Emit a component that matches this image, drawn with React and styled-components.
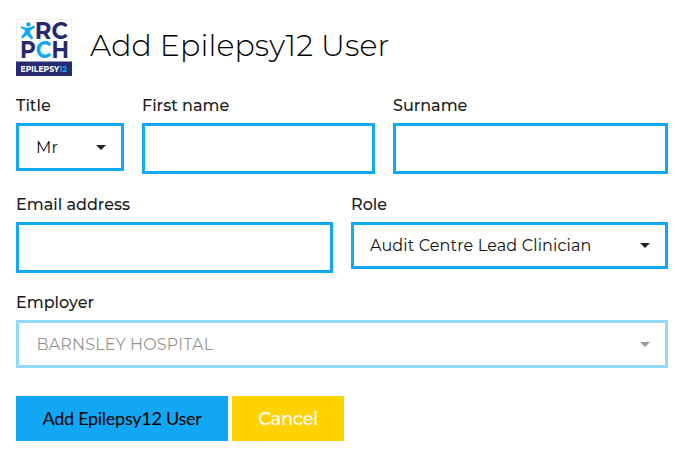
import React from "react";
import styled, { createGlobalStyle } from "styled-components";

const GlobalStyle = createGlobalStyle`
  * { box-sizing: border-box; }
  body {
    margin: 0;
    background: #fff;
    font-family: Montserrat, Inter, sans-serif;
    color: #1c1c1c;
  }
`;

const Page = styled.main`
  width: 675px;
  height: 451px;
  padding: 19px 7px 0 16px;
  overflow: hidden;
`;

const Header = styled.header`
  display: flex;
  align-items: flex-start;
  gap: 18px;
  height: 77px;
`;

const Logo = styled.svg`
  display: block;
  width: 56px;
  height: 57px;
  flex: none;
  overflow: visible;
`;

const Heading = styled.h1`
  margin: 9px 0 0;
  font-size: 30px;
  line-height: 36px;
  font-weight: 300;
  letter-spacing: 0.15px;
  color: #000;
  white-space: nowrap;
`;

const Row = styled.div`
  display: grid;
  grid-template-columns: ${(p) => p.$columns};
  column-gap: 18px;
  align-items: start;
  height: ${(p) => p.$height}px;
`;

const Field = styled.div`
  display: flex;
  flex-direction: column;
`;

const Label = styled.label`
  height: 27px;
  line-height: 20px;
  font-size: 16px;
  font-weight: 500;
  white-space: nowrap;
`;

const TextInput = styled.input`
  width: 100%;
  height: 51px;
  padding: 0 16px;
  border: 3px solid #11a7f2;
  border-radius: 0;
  background: #fff;
  font: inherit;
  outline: none;
`;

const Select = styled.div`
  display: flex;
  align-items: center;
  justify-content: space-between;
  height: ${(p) => p.$height || 48}px;
  padding: 0 15px 0 ${(p) => p.$inset || 16}px;
  border: 3px solid #11a7f2;
  background: #fff;
  color: #111;
  font-size: 16px;
  letter-spacing: 0.15px;
  white-space: nowrap;
  opacity: ${(p) => (p.$disabled ? 0.45 : 1)};
`;

const Caret = styled.span`
  width: 0;
  height: 0;
  border: 5px solid transparent;
  border-top: 5px solid #222;
  border-bottom: 0;
`;

const Actions = styled.div`
  display: flex;
  gap: 4px;
`;

const Button = styled.button`
  width: ${(p) => p.$width}px;
  height: 45px;
  padding: 0;
  border: 0;
  font-size: 18px;
  white-space: nowrap;
`;

const SubmitButton = styled(Button)`
  padding-bottom: 1px;
  background: #11a7f2;
  color: #000;
  font-family: Lato, sans-serif;
  letter-spacing: -0.27px;
`;

const CancelButton = styled(Button)`
  background: #ffd200;
  color: #fff;
  font-family: Montserrat, Inter, sans-serif;
  font-weight: 500;
  letter-spacing: -0.4px;
`;

function RcpchLogo() {
  return (
    <Logo viewBox="0 0 56 57" role="img" aria-label="RCPCH Epilepsy12">
      <rect x="0.5" y="0.5" width="55" height="56" fill="#fff" stroke="#f1f1f4" />
      <path
        d="M12.4 3.2a2.2 2.2 0 1 1 0 4.4 2.2 2.2 0 0 1 0-4.4ZM5 7.3l4.9 1.5 3.2-.2 5.3-2.2.7 2-4.8 3.2-.1 2.5 3.2 5.2-2 1.3-4.3-4.5-4.8 3.5-1.3-1.6 3.7-4.8-.1-2.5-3.9-1.6Z"
        fill="#11a7f2"
      />
      <g fontFamily="Montserrat, Inter, sans-serif" fontWeight="700">
        <text x="18.8" y="19.6" fontSize="23" textLength="33" lengthAdjust="spacingAndGlyphs" fill="#25286c">RC</text>
        <text x="4" y="38.6" fontSize="23" textLength="49" lengthAdjust="spacingAndGlyphs" fill="#25286c">
          P<tspan fill="#11a7f2">C</tspan>H
        </text>
        <rect y="42.5" width="56" height="14.5" fill="#292b72" />
        <text x="4.5" y="52.8" fontSize="8" textLength="46.5" lengthAdjust="spacingAndGlyphs" fill="#fff">
          EPILEPSY<tspan fill="#11a7f2">12</tspan>
        </text>
      </g>
    </Logo>
  );
}

export default function App() {
  return (
    <>
      <GlobalStyle />
      <Page>
        <Header>
          <RcpchLogo />
          <Heading>Add Epilepsy12 User</Heading>
        </Header>

        <Row $columns="108px 233px 275px" $height={99}>
          <Field>
            <Label>Title</Label>
            <Select $inset={17}>Mr<Caret /></Select>
          </Field>
          <Field>
            <Label htmlFor="first">First name</Label>
            <TextInput id="first" />
          </Field>
          <Field>
            <Label htmlFor="surname">Surname</Label>
            <TextInput id="surname" />
          </Field>
        </Row>

        <Row $columns="317px 317px" $height={98}>
          <Field>
            <Label htmlFor="email">Email address</Label>
            <TextInput id="email" />
          </Field>
          <Field>
            <Label>Role</Label>
            <Select $height={47}>Audit Centre Lead Clinician<Caret /></Select>
          </Field>
        </Row>

        <Row $columns="652px" $height={103}>
          <Field>
            <Label>Employer</Label>
            <Select $disabled $inset={17.5}>BARNSLEY HOSPITAL<Caret /></Select>
          </Field>
        </Row>

        <Actions>
          <SubmitButton $width={212}>Add Epilepsy12 User</SubmitButton>
          <CancelButton $width={112}>Cancel</CancelButton>
        </Actions>
      </Page>
    </>
  );
}
